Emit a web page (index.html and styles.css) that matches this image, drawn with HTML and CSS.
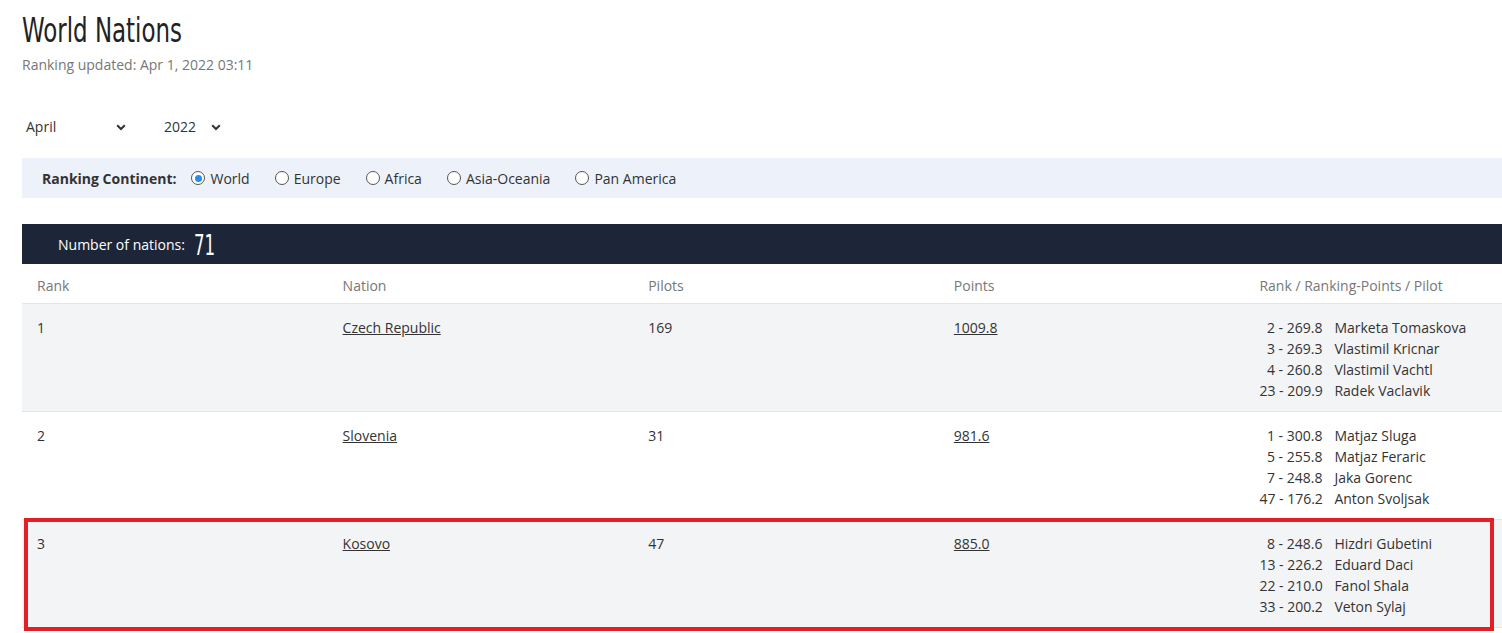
FILE: index.html
```html
<!DOCTYPE html>
<html lang="en">
<head>
<meta charset="utf-8">
<title>World Nations</title>
<link rel="stylesheet" href="styles.css">
</head>
<body>
<div class="page">
  <h1 class="title"><span class="narrow">World Nations</span></h1>
  <p class="updated">Ranking updated: Apr 1, 2022 03:11</p>

  <div class="filters">
    <div class="select select-month">
      <span>April</span>
      <svg class="chev" width="10" height="7" viewBox="0 0 10 7"><path d="M1.2 1.2 L5 5 L8.8 1.2" fill="none" stroke="#333" stroke-width="2"/></svg>
    </div>
    <div class="select select-year">
      <span>2022</span>
      <svg class="chev" width="10" height="7" viewBox="0 0 10 7"><path d="M1.2 1.2 L5 5 L8.8 1.2" fill="none" stroke="#333" stroke-width="2"/></svg>
    </div>
  </div>

  <div class="continent">
    <span class="continent-label">Ranking Continent:</span>
    <label class="radio"><span class="dot checked"></span>World</label>
    <label class="radio"><span class="dot"></span>Europe</label>
    <label class="radio"><span class="dot"></span>Africa</label>
    <label class="radio"><span class="dot"></span>Asia-Oceania</label>
    <label class="radio"><span class="dot"></span>Pan America</label>
  </div>

  <div class="countbar">
    <span class="count-label">Number of nations:</span>
    <span class="count-num"><span class="narrow">71</span></span>
  </div>

  <div class="table">
    <div class="row head">
      <div class="cell">Rank</div>
      <div class="cell">Nation</div>
      <div class="cell">Pilots</div>
      <div class="cell">Points</div>
      <div class="cell">Rank / Ranking-Points / Pilot</div>
    </div>

    <div class="row odd">
      <div class="cell">1</div>
      <div class="cell"><a href="#">Czech Republic</a></div>
      <div class="cell">169</div>
      <div class="cell"><a href="#">1009.8</a></div>
      <div class="cell">
        <div class="pilots">
          <span class="pr">2 - 269.8</span><span>Marketa Tomaskova</span>
          <span class="pr">3 - 269.3</span><span>Vlastimil Kricnar</span>
          <span class="pr">4 - 260.8</span><span>Vlastimil Vachtl</span>
          <span class="pr">23 - 209.9</span><span>Radek Vaclavik</span>
        </div>
      </div>
    </div>

    <div class="row even">
      <div class="cell">2</div>
      <div class="cell"><a href="#">Slovenia</a></div>
      <div class="cell">31</div>
      <div class="cell"><a href="#">981.6</a></div>
      <div class="cell">
        <div class="pilots">
          <span class="pr">1 - 300.8</span><span>Matjaz Sluga</span>
          <span class="pr">5 - 255.8</span><span>Matjaz Feraric</span>
          <span class="pr">7 - 248.8</span><span>Jaka Gorenc</span>
          <span class="pr">47 - 176.2</span><span>Anton Svoljsak</span>
        </div>
      </div>
    </div>

    <div class="row odd">
      <div class="cell">3</div>
      <div class="cell"><a href="#">Kosovo</a></div>
      <div class="cell">47</div>
      <div class="cell"><a href="#">885.0</a></div>
      <div class="cell">
        <div class="pilots">
          <span class="pr">8 - 248.6</span><span>Hizdri Gubetini</span>
          <span class="pr">13 - 226.2</span><span>Eduard Daci</span>
          <span class="pr">22 - 210.0</span><span>Fanol Shala</span>
          <span class="pr">33 - 200.2</span><span>Veton Sylaj</span>
        </div>
      </div>
    </div>
  </div>
</div>
<div class="highlight"></div>
</body>
</html>
```
FILE: styles.css
```css
html {
  overflow: hidden;
  background: #fff;
}
body {
  margin: 0;
  padding: 0;
  font-family: "Open Sans", "Liberation Sans", sans-serif;
  font-size: 14px;
  color: #333;
}
.page {
  padding-left: 22px;
  width: 1528px;
}
.narrow {
  display: inline-block;
  transform: scaleX(0.75);
  transform-origin: left center;
}
.title {
  margin: 0;
  padding-top: 8px;
  font-family: "DejaVu Sans Condensed", "DejaVu Sans", sans-serif;
  font-stretch: condensed;
  font-weight: normal;
  font-size: 34px;
  line-height: 44px;
  color: #222;
  white-space: nowrap;
}
.updated {
  margin: 2px 0 0;
  color: #777;
  line-height: 21px;
}
.filters {
  display: flex;
  align-items: center;
  margin-top: 41px;
  height: 21px;
}
.select {
  display: flex;
  align-items: center;
  justify-content: space-between;
  padding-left: 4px;
}
.select-month { width: 100px; }
.select-year { width: 57px; margin-left: 34px; }
.chev { display: block; margin-top: 1px; }
.continent {
  display: flex;
  align-items: center;
  margin-top: 21px;
  height: 40px;
  background: #edf1f9;
  padding-left: 20px;
  width: 1460px;
}
.continent-label {
  font-weight: bold;
  margin-right: 15px;
}
.radio {
  display: flex;
  align-items: center;
  margin-right: 25px;
}
.dot {
  width: 14px;
  height: 14px;
  border: 1px solid #555;
  border-radius: 50%;
  margin-right: 5px;
  box-sizing: border-box;
  display: flex;
  align-items: center;
  justify-content: center;
  background: #fff;
}
.dot.checked::after {
  content: "";
  width: 7px;
  height: 7px;
  border-radius: 50%;
  background: #2b8ce3;
}
.countbar {
  margin-top: 26px;
  height: 40px;
  background: #1c2638;
  display: flex;
  align-items: center;
  padding-left: 36px;
  color: #fff;
}
.count-label {
  font-size: 14px;
}
.count-num {
  font-family: "DejaVu Sans Condensed", "DejaVu Sans", sans-serif;
  font-stretch: condensed;
  font-weight: 500;
  font-size: 28px;
  margin-left: 9px;
  margin-top: 2px;
  width: 20px;
  white-space: nowrap;
}
.count-num .narrow {
  transform: scaleX(0.66);
}
.row {
  display: grid;
  grid-template-columns: repeat(5, 1fr);
  border-bottom: 1px solid #e2e4e8;
}
.row.head {
  color: #777;
}
.row.head .cell {
  padding-top: 11px;
  padding-bottom: 7px;
}
.row.odd { background: #f3f4f6; }
.row.even { background: #fff; }
.cell {
  padding: 13px 15px 10px;
  line-height: 21px;
}
.cell a {
  color: #333;
  text-decoration: underline;
}
.pilots {
  display: grid;
  grid-template-columns: 63px auto;
  column-gap: 12px;
}
.pr {
  text-align: right;
  white-space: nowrap;
}
.highlight {
  position: absolute;
  left: 24px;
  top: 518px;
  width: 1462px;
  height: 105px;
  border: 4px solid #e41e26;
  pointer-events: none;
}
```
